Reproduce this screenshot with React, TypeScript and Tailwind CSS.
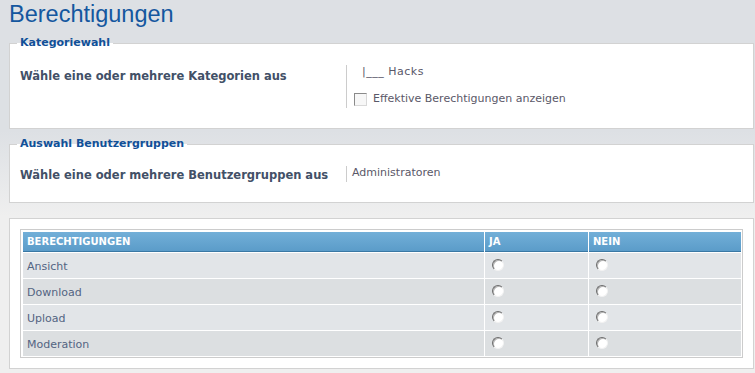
import React from 'react';

const permissions = ['Ansicht', 'Download', 'Upload', 'Moderation'];

const Radio = () => (
    <span className="block h-[12px] w-[12px] rounded-full border border-t-[#6b6b6b] border-l-[#6b6b6b] border-r-[#f2f2f2] border-b-[#f2f2f2] bg-white shadow-[inset_1px_1px_0_#b5b5b5]" />
);

const Checkbox = () => (
    <span className="block h-[13px] w-[13px] border border-t-[#8a8a8a] border-l-[#8a8a8a] border-r-[#d8d8d8] border-b-[#d8d8d8] bg-[#f7f7f7]" />
);

export default function App() {
    return (
        <div className="h-[373px] w-[755px] overflow-hidden bg-[linear-gradient(#dde0e4_35%,#efefef_58%)] pl-[9px] pr-[1px] font-['DejaVu_Sans',sans-serif]">
            <h1 className="h-[28px] font-['Liberation_Sans',Arial,sans-serif] text-[23.5px] leading-[28px] text-[#14579f]">
                Berechtigungen
            </h1>

            {/* Kategoriewahl */}
            <fieldset className="mt-[8px] border border-[#d2d2d2] bg-white pl-[10px] pr-[10px] pt-[15px] pb-[20px]">
                <legend className="-ml-[3px] px-[3px] text-[11px] font-bold leading-[14px] text-[#115098]">
                    Kategoriewahl
                </legend>
                <div className="flex">
                    <div className="w-[326px] pt-[4px] text-[11.5px] font-bold leading-[14px] text-[#425067]">
                        Wähle eine oder mehrere Kategorien aus
                    </div>
                    <div className="border-l border-[#cccccc] pb-[2px] text-[11px] leading-[14px] text-[#5a5868]">
                        <div className="pl-[15px] tracking-[0.5px]">|___ Hacks</div>
                        <div className="mt-[13px] flex items-center gap-[6px] pl-[7px]">
                            <Checkbox />
                            <span>Effektive Berechtigungen anzeigen</span>
                        </div>
                    </div>
                </div>
            </fieldset>

            {/* Auswahl Benutzergruppen */}
            <fieldset className="mt-[8px] border border-[#d2d2d2] bg-white pl-[10px] pr-[10px] pt-[15px] pb-[20px]">
                <legend className="-ml-[3px] px-[3px] text-[11px] font-bold leading-[14px] text-[#115098]">
                    Auswahl Benutzergruppen
                </legend>
                <div className="flex">
                    <div className="w-[326px] pt-[2px] text-[11.5px] font-bold leading-[14px] text-[#425067]">
                        Wähle eine oder mehrere Benutzergruppen aus
                    </div>
                    <div className="border-l border-[#cccccc] pb-[2px] pl-[5px] text-[11px] leading-[14px] text-[#5a5868]">
                        Administratoren
                    </div>
                </div>
            </fieldset>

            {/* Berechtigungstabelle */}
            <div className="mt-[15px] border border-[#d2d2d2] bg-white px-[10px] py-[10px]">
                <div className="border border-[#cccccc] bg-white pt-[2px] pl-[2px] pr-[1px] pb-[1px]">
                    <div className="grid grid-cols-[461px_103px_152px] gap-px">
                        {['Berechtigungen', 'Ja', 'Nein'].map((h) => (
                            <div
                                key={h}
                                className="flex h-[20px] items-center border-b border-[#3a78a4] bg-[linear-gradient(#72afd8,#5b9cc9)] pl-[4px] text-[10px] font-bold uppercase text-white"
                            >
                                {h}
                            </div>
                        ))}
                        {permissions.map((p, i) => {
                            const bg = i % 2 === 0 ? 'bg-[#e2e5e8]' : 'bg-[#dcdfe1]';
                            return (
                                <React.Fragment key={p}>
                                    <div className={`flex h-[25px] items-center pl-[4px] pt-[3px] text-[11px] text-[#536482] ${bg}`}>
                                        {p}
                                    </div>
                                    <div className={`h-[25px] pl-[7px] pt-[6px] ${bg}`}>
                                        <Radio />
                                    </div>
                                    <div className={`h-[25px] pl-[7px] pt-[6px] ${bg}`}>
                                        <Radio />
                                    </div>
                                </React.Fragment>
                            );
                        })}
                    </div>
                </div>
            </div>
        </div>
    );
}
